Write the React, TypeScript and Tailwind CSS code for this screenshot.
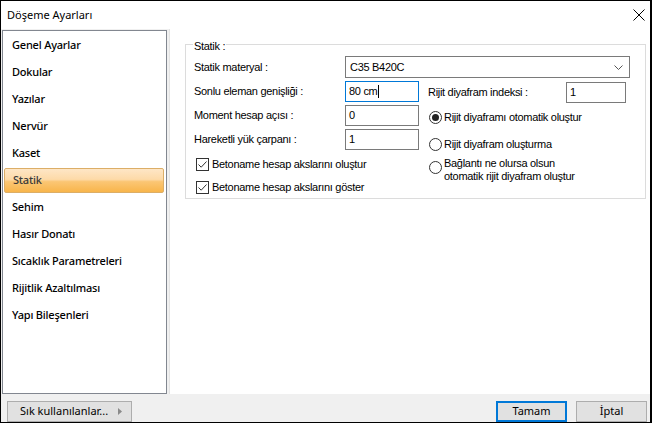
const menu = [
  "Genel Ayarlar",
  "Dokular",
  "Yazılar",
  "Nervür",
  "Kaset",
  "Statik",
  "Sehim",
  "Hasır Donatı",
  "Sıcaklık Parametreleri",
  "Rijitlik Azaltılması",
  "Yapı Bileşenleri",
];

const ui = { fontFamily: '"Noto Sans", "Open Sans", sans-serif' };
const ms = { fontFamily: '"Liberation Sans", Arial, sans-serif' };

function Check() {
  return (
    <span className="w-[13px] h-[13px] border border-[#333] bg-white flex items-center justify-center shrink-0">
      <svg width="11" height="11" viewBox="0 0 11 11">
        <path d="M1.5 5.5 L4.2 8.2 L9.5 2.5" fill="none" stroke="#333" strokeWidth="1" />
      </svg>
    </span>
  );
}

function Radio({ on }: { on?: boolean }) {
  return (
    <span className="w-[13px] h-[13px] rounded-full border border-[#333] bg-white flex items-center justify-center shrink-0">
      {on && <span className="w-[7px] h-[7px] rounded-full bg-[#222]" />}
    </span>
  );
}

export default function App() {
  return (
    <div className="w-[652px] h-[423px] border-l border-t border-b border-r-2 border-black bg-[#f0f0f0] flex flex-col overflow-hidden">
      {/* title bar */}
      <div className="h-[28px] bg-white flex items-center justify-between pl-[6px] pr-[5px] shrink-0">
        <span className="text-[11px] text-black" style={ui}>Döşeme Ayarları</span>
        <svg width="12" height="12" viewBox="0 0 12 12">
          <path d="M0.5 0.5 L11.5 11.5 M11.5 0.5 L0.5 11.5" stroke="#000" strokeWidth="1" />
        </svg>
      </div>

      <div className="flex h-[365px] shrink-0">
        {/* sidebar */}
        <div className="ml-[1px] mt-[1px] w-[165px] h-[364px] border border-[#828790] bg-white pt-[1px] shrink-0">
          {menu.map((m) => (
            <div key={m} className="h-[27px] flex items-center">
              {m === "Statik" ? (
                <div className="ml-[1px] w-[160px] h-[25px] mt-[-1px] flex items-center pl-[8px] rounded-[2px] border border-[#dcae67] bg-[linear-gradient(to_bottom,#fee6c6_0%,#fddaa8_45%,#fbc674_55%,#f8b54b_100%)] text-[11px] font-medium tracking-[-0.2px] text-[#3a3a3a]" style={ui}>
                  {m}
                </div>
              ) : (
                <span className="pl-[9px] text-[11px] font-medium tracking-[-0.2px] text-black" style={ui}>{m}</span>
              )}
            </div>
          ))}
        </div>

        {/* content */}
        <div className="ml-[2px] flex-1 bg-white border-l border-[#e3e3e3] pt-[15px] pl-[15px] pr-[4px]">
          <div className="relative border border-[#dcdcdc] h-[155px] pt-[11px] pl-[8px] pr-[15px] text-[11px] tracking-[-0.3px] text-black" style={ms}>
            <span className="absolute left-[7px] top-[-7px] bg-white px-[1px]">Statik :</span>

            <div className="flex items-center h-[22px]">
              <span className="w-[151px]">Statik materyal :</span>
              <div className="flex-1 h-[22px] border border-[#7a7a7a] flex items-center justify-between pl-[4px] pr-[6px]">
                <span>C35 B420C</span>
                <svg width="9" height="5" viewBox="0 0 9 5">
                  <path d="M0.5 0.5 L4.5 4.5 L8.5 0.5" fill="none" stroke="#555" strokeWidth="1" />
                </svg>
              </div>
            </div>

            <div className="flex mt-[2px]">
              <div className="flex flex-col">
                <div className="flex items-center h-[21px] mt-[1px]">
                  <span className="w-[151px]">Sonlu eleman genişliği :</span>
                  <div className="w-[74px] h-[21px] border border-[#0078d7] flex items-center pl-[3px]">
                    <span>80 cm</span>
                    <span className="w-[1px] h-[13px] bg-black ml-[1px]" />
                  </div>
                </div>
                <div className="flex items-center h-[21px] mt-[3px]">
                  <span className="w-[151px]">Moment hesap açısı :</span>
                  <div className="w-[74px] h-[21px] border border-[#7a7a7a] flex items-center pl-[3px]">0</div>
                </div>
                <div className="flex items-center h-[21px] mt-[3px]">
                  <span className="w-[151px]">Hareketli yük çarpanı :</span>
                  <div className="w-[74px] h-[21px] border border-[#7a7a7a] flex items-center pl-[3px]">1</div>
                </div>
                <div className="flex items-center gap-[3px] mt-[8px] ml-[2px] h-[13px]">
                  <Check />
                  <span>Betoname hesap akslarını oluştur</span>
                </div>
                <div className="flex items-center gap-[3px] mt-[10px] ml-[2px] h-[13px]">
                  <Check />
                  <span>Betoname hesap akslarını göster</span>
                </div>
              </div>

              <div className="flex flex-col ml-[8px] flex-1">
                <div className="flex items-center h-[21px] mt-[2px]">
                  <span className="w-[139px] pl-[1px]">Rijit diyafram indeksi :</span>
                  <div className="w-[60px] h-[21px] border border-[#7a7a7a] flex items-center pl-[3px]">1</div>
                </div>
                <div className="flex items-center gap-[2px] mt-[8px] ml-[2px] h-[13px]">
                  <Radio on />
                  <span>Rijit diyaframı otomatik oluştur</span>
                </div>
                <div className="flex items-center gap-[2px] mt-[14px] ml-[2px] h-[13px]">
                  <Radio />
                  <span>Rijit diyafram oluşturma</span>
                </div>
                <div className="flex items-start gap-[2px] mt-[6px] ml-[2px]">
                  <span className="mt-[4px]">
                    <Radio />
                  </span>
                  <span className="leading-[13px]">
                    Bağlantı ne olursa olsun
                    <br />
                    otomatik rijit diyafram oluştur
                  </span>
                </div>
              </div>
            </div>
          </div>
        </div>
      </div>

      {/* bottom bar */}
      <div className="flex items-start pt-[7px] text-[11px] text-black" style={ui}>
        <button className="ml-[6px] w-[125px] h-[21px] bg-[#e1e1e1] border border-[#adadad] flex items-center justify-between pl-[12px] pr-[9px]">
          <span>Sık kullanılanlar...</span>
          <svg width="4" height="7" viewBox="0 0 4 7">
            <path d="M0 0 L4 3.5 L0 7 Z" fill="#8a8a8a" />
          </svg>
        </button>
        <button className="ml-auto w-[71px] h-[21px] bg-[#e1e1e1] border-2 border-[#0078d7] flex items-center justify-center">
          Tamam
        </button>
        <button className="ml-[9px] mr-[3px] w-[71px] h-[21px] bg-[#e1e1e1] border border-[#adadad] flex items-center justify-center">
          İptal
        </button>
      </div>
    </div>
  );
}
